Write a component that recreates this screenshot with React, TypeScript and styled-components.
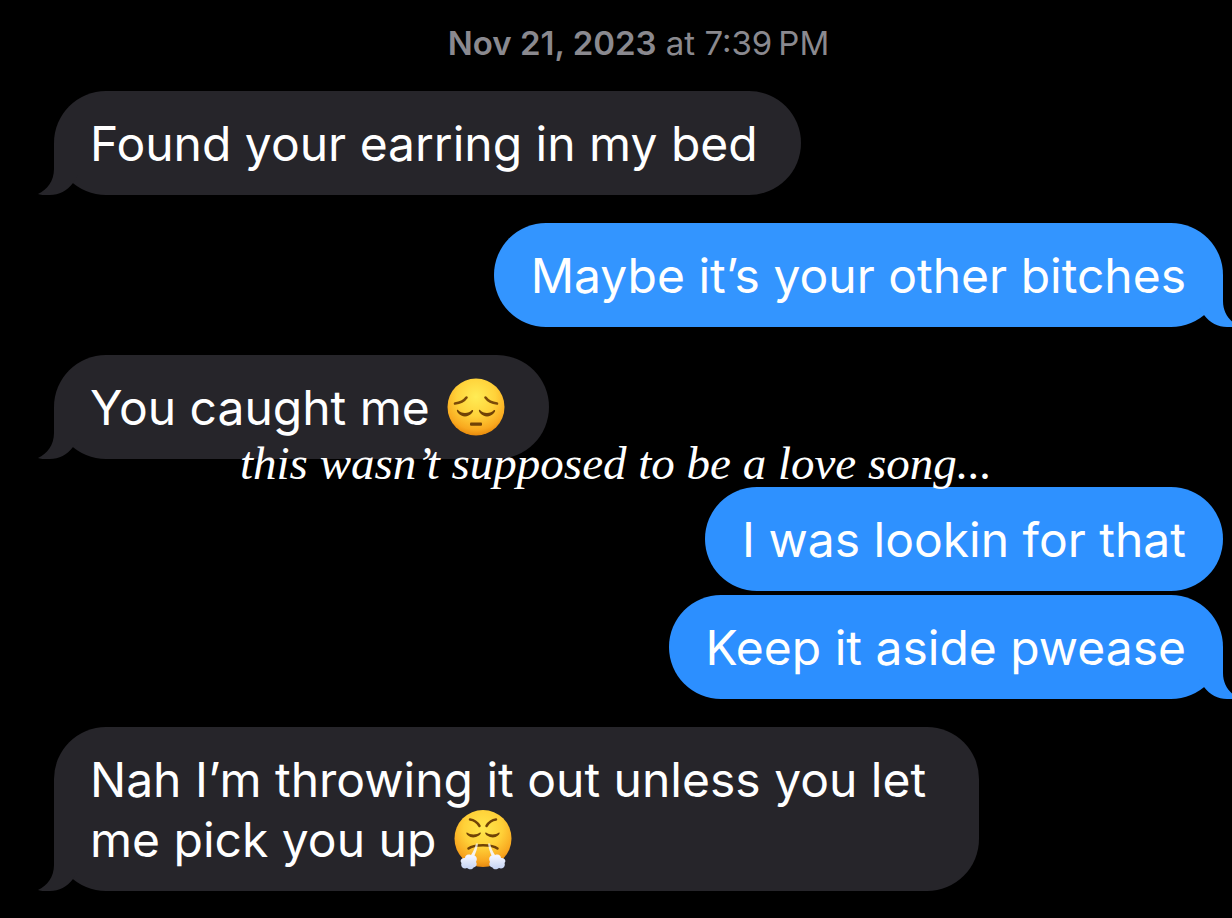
import React from "react";
import styled, { createGlobalStyle, css } from "styled-components";

const GlobalStyle = createGlobalStyle`
  * { box-sizing: border-box; }
  html, body { margin: 0; background: #000; }
  body { font-family: Inter, "Liberation Sans", sans-serif; overflow-x: hidden; }
`;

const Conversation = styled.main`
  position: relative;
  min-height: 100vh;
  padding: 23px 9px 27px 54px;
  background: #000;
  overflow: hidden;
`;

const Timestamp = styled.time`
  display: block;
  margin-bottom: 28px;
  text-align: center;
  color: #8a898f;
  font-size: 33px;
  line-height: 40px;
`;

const DateText = styled.strong`
  font-weight: 600;
`;

const Thread = styled.ol`
  display: flex;
  flex-direction: column;
  gap: 28px;
  margin: 0;
  padding: 0;
  list-style: none;
`;

const Group = styled.li<{ $sent?: boolean }>`
  display: flex;
  flex-direction: column;
  align-items: ${(p) => (p.$sent ? "flex-end" : "flex-start")};
  gap: 4px;
`;

const Bubble = styled.p<{ $sent?: boolean; $tone?: string }>`
  position: relative;
  margin: 0;
  max-width: 925px;
  border-radius: 52px;
  font-size: 48px;
  line-height: 60px;
  ${(p) =>
    p.$sent
      ? css`
          padding: 23px 37px 21px;
          background: ${p.$tone};
          color: ${p.$tone};
        `
      : css`
          padding: 23px 43px 21px 36px;
          background: #26252a;
          color: #26252a;
        `}
`;

const Words = styled.span`
  position: relative;
  color: #fff;
`;

const TailShape = styled.svg<{ $sent?: boolean }>`
  position: absolute;
  bottom: 0;
  width: 40px;
  height: 60px;
  ${(p) => (p.$sent ? "right: -16px; transform: scaleX(-1);" : "left: -16px;")}
`;

const Emoji = styled.svg`
  width: 60px;
  height: 60px;
  margin-left: 3px;
  vertical-align: top;
`;

const Caption = styled.p`
  position: absolute;
  top: 433px;
  left: 0;
  right: 0;
  margin: 0;
  text-align: center;
  color: #fff;
  font-family: "Liberation Serif", serif;
  font-style: italic;
  font-size: 47px;
  line-height: 60px;
`;

function Tail({ sent }: { sent?: boolean }) {
  return (
    <TailShape $sent={sent} viewBox="0 0 40 60" aria-hidden="true">
      <path
        fill="currentColor"
        d="M16 8V34C16 46 9 55 0 59C2 60 6 60 12 60C21 60 29 56 35 48L40 40V8Z"
      />
    </TailShape>
  );
}

function PensiveFace() {
  return (
    <Emoji viewBox="0 0 60 60" role="img" aria-label="pensive face">
      <defs>
        <radialGradient id="pensive" cx="50%" cy="32%" r="68%">
          <stop offset="0" stopColor="#ffec55" />
          <stop offset="0.5" stopColor="#ffd23a" />
          <stop offset="0.85" stopColor="#f9a91f" />
          <stop offset="1" stopColor="#e88a0c" />
        </radialGradient>
      </defs>
      <circle cx="30" cy="29" r="28.5" fill="url(#pensive)" />
      <g fill="none" stroke="#7b4a08" strokeWidth="2.6" strokeLinecap="round">
        <path d="M9 25.5C14 25 18 23 20.5 19.5" />
        <path d="M51 25.5C46 25 42 23 39.5 19.5" />
      </g>
      <g fill="#704206">
        <path d="M12 32C15 36 23 36 26 32C28 32 27 34 26 35C22 39.5 16 39.5 12 35C10.5 33 10.5 31 12 32Z" />
        <path d="M34 32C37 36 45 36 48 32C50 32 49 34 48 35C44 39.5 38 39.5 34 35C32.5 33 32.5 31 34 32Z" />
        <rect x="24" y="44.5" width="12" height="3.2" rx="1" />
      </g>
    </Emoji>
  );
}

function HuffingFace() {
  return (
    <Emoji viewBox="0 0 60 60" role="img" aria-label="face with steam from nose">
      <defs>
        <radialGradient id="huffing" cx="50%" cy="32%" r="68%">
          <stop offset="0" stopColor="#ffe64d" />
          <stop offset="0.5" stopColor="#ffd038" />
          <stop offset="0.85" stopColor="#f8a61f" />
          <stop offset="1" stopColor="#e6890f" />
        </radialGradient>
        <linearGradient id="steam" x1="0" y1="0" x2="0" y2="1">
          <stop offset="0" stopColor="#fff" stopOpacity="0.7" />
          <stop offset="0.5" stopColor="#f2f5ff" />
          <stop offset="1" stopColor="#c3d2f3" />
        </linearGradient>
      </defs>
      <circle cx="30" cy="28.5" r="28.5" fill="url(#huffing)" />
      <g fill="none" stroke="#704206" strokeWidth="2.5" strokeLinecap="round">
        <path d="M17 9.5C21 10 24 12 26.5 16" />
        <path d="M43 9.5C39 10 36 12 33.5 16" />
        <path d="M15.5 38.5C21 34 39 34 44.5 38.5" />
      </g>
      <g fill="#704206">
        <path d="M14 22.500C17 25 24 25 27 22.500C29 22.500 27 25 26 25.500C22 28 18 28 15 25.500C13 24 13 22 14 22.500Z" />
        <path d="M33 22.500C36 25 43 25 46 22.500C47 22 47 24 45 25.500C42 28 38 28 34 25.500C33 25 31 22.500 33 22.500Z" />
      </g>
      <path
        fill="url(#steam)"
        d="M23 33.500C21.500 39 20 42 18 45C14 43.500 12 46 12 48C8 47.500 6.500 51 8.500 53C7 57 11 59.500 14 58C17 60.500 20 59 20.500 57.500C23.500 57 24.500 54 23 52C25 48 23 46.500 21.500 45.500C23 42 24.500 38 25 33.500Z"
      />
      <path
        fill="url(#steam)"
        d="M37 33.500C38.500 39 40 42 42 45C46 43.500 48 46 48 48C52 47.500 53.500 51 51.500 53C53 57 49 59.500 46 58C43 60.500 40 59 39.500 57.500C36.500 57 35.500 54 37 52C35 48 37 46.500 38.500 45.500C37 42 35.500 38 35 33.500Z"
      />
    </Emoji>
  );
}

type MessageProps = {
  sent?: boolean;
  tone?: string;
  tail?: boolean;
  children: React.ReactNode;
};

function Message({ sent, tone, tail = true, children }: MessageProps) {
  return (
    <Bubble $sent={sent} $tone={tone}>
      {tail && <Tail sent={sent} />}
      <Words>{children}</Words>
    </Bubble>
  );
}

export default function App() {
  return (
    <>
      <GlobalStyle />
      <Conversation>
        <Timestamp dateTime="2023-11-21T19:39">
          <DateText>Nov 21, 2023</DateText> at 7:39{"\u2009"}PM
        </Timestamp>
        <Thread>
          <Group>
            <Message>Found your earring in my bed</Message>
          </Group>
          <Group $sent>
            <Message sent tone="#3395ff">Maybe it’s your other bitches</Message>
          </Group>
          <Group>
            <Message>
              You caught me <PensiveFace />
            </Message>
          </Group>
          <Group $sent>
            <Message sent tone="#2e91ff" tail={false}>I was lookin for that</Message>
            <Message sent tone="#2c8fff">Keep it aside pwease</Message>
          </Group>
          <Group>
            <Message>
              Nah I’m throwing it out unless you let me pick you up <HuffingFace />
            </Message>
          </Group>
        </Thread>
        <Caption>this wasn’t supposed to be a love song...</Caption>
      </Conversation>
    </>
  );
}
